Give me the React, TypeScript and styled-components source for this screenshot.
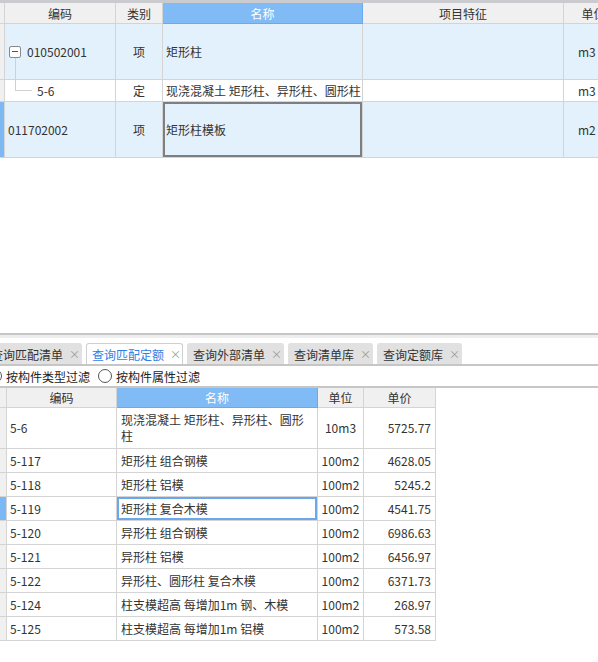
import React from "react";
import styled, { createGlobalStyle, css } from "styled-components";

const GlobalStyle = createGlobalStyle`
  html, body {
    margin: 0;
    padding: 0;
    background: #ffffff;
  }
  body {
    font-family: "Noto Sans CJK SC", "Microsoft YaHei", sans-serif;
    font-size: 12px;
    color: #333333;
  }
`;

const topRows = [
  { code: "010502001", kind: "项", name: "矩形柱", unit: "m3", height: 56, tint: true, tree: "parent" },
  { code: "5-6", kind: "定", name: "现浇混凝土 矩形柱、异形柱、圆形柱", unit: "m3", height: 22, tint: false, tree: "child" },
  { code: "011702002", kind: "项", name: "矩形柱模板", unit: "m2", height: 56, tint: true, tree: "", selected: true },
];

const quotaRows = [
  { code: "5-6", name: "现浇混凝土 矩形柱、异形柱、圆形柱", unit: "10m3", price: "5725.77", tall: true },
  { code: "5-117", name: "矩形柱 组合钢模", unit: "100m2", price: "4628.05" },
  { code: "5-118", name: "矩形柱 铝模", unit: "100m2", price: "5245.2" },
  { code: "5-119", name: "矩形柱 复合木模", unit: "100m2", price: "4541.75", selected: true },
  { code: "5-120", name: "异形柱 组合钢模", unit: "100m2", price: "6986.63" },
  { code: "5-121", name: "异形柱 铝模", unit: "100m2", price: "6456.97" },
  { code: "5-122", name: "异形柱、圆形柱 复合木模", unit: "100m2", price: "6371.73" },
  { code: "5-124", name: "柱支模超高 每增加1m 钢、木模", unit: "100m2", price: "268.97" },
  { code: "5-125", name: "柱支模超高 每增加1m 铝模", unit: "100m2", price: "573.58" },
];

const tabs = [
  { label: "查询匹配清单" },
  { label: "查询匹配定额", active: true },
  { label: "查询外部清单" },
  { label: "查询清单库" },
  { label: "查询定额库" },
];

const App = () => {
  return (
    <>
      <GlobalStyle />
      <Page>
        <TopPane>
          <BillGrid>
            <Head />
            <Head>编码</Head>
            <Head>类别</Head>
            <Head $accent>名称</Head>
            <Head>项目特征</Head>
            <Head>单位</Head>
            {topRows.map((r) => (
              <React.Fragment key={r.code}>
                <Marker $h={r.height} $on={!!r.selected} />
                <Cell $h={r.height} $tint={r.tint} $pad={r.tree ? 0 : 3}>
                  {r.tree === "parent" && (
                    <>
                      <Toggle>
                        <i />
                      </Toggle>
                      <CodeText $gap={6}>{r.code}</CodeText>
                    </>
                  )}
                  {r.tree === "child" && (
                    <>
                      <Connector />
                      <CodeText $gap={5}>{r.code}</CodeText>
                    </>
                  )}
                  {!r.tree && <CodeText $gap={0}>{r.code}</CodeText>}
                </Cell>
                <Cell $h={r.height} $tint={r.tint} $center>
                  {r.kind}
                </Cell>
                <Cell $h={r.height} $tint={r.tint} $pad={3} $focus={r.selected ? "gray" : undefined}>
                  {r.name}
                </Cell>
                <Cell $h={r.height} $tint={r.tint} />
                <Cell $h={r.height} $tint={r.tint} $pad={14}>
                  {r.unit}
                </Cell>
              </React.Fragment>
            ))}
          </BillGrid>
        </TopPane>
        <SplitBand />
        <TabBar>
          <TabStrip>
            {tabs.map((t) => (
              <Tab key={t.label} $active={!!t.active}>
                <span>{t.label}</span>
                <Close>×</Close>
              </Tab>
            ))}
          </TabStrip>
        </TabBar>
        <FilterRow>
          <Radio>
            <Dot />
            按构件类型过滤
          </Radio>
          <Radio>
            <Dot />
            按构件属性过滤
          </Radio>
        </FilterRow>
        <QuotaArea>
          <QuotaGrid>
            <QHead />
            <QHead>编码</QHead>
            <QHead $accent>名称</QHead>
            <QHead>单位</QHead>
            <QHead>单价</QHead>
            {quotaRows.map((r) => {
              const h = r.tall ? 41 : 24;
              return (
                <React.Fragment key={r.code}>
                  <QMarker $h={h} $on={!!r.selected} />
                  <QCell $h={h} $pad={3}>
                    {r.code}
                  </QCell>
                  <QCell $h={h} $pad={4} $focus={r.selected}>
                    {r.name}
                  </QCell>
                  <QCell $h={h} $center>
                    {r.unit}
                  </QCell>
                  <QCell $h={h} $right>
                    {r.price}
                  </QCell>
                </React.Fragment>
              );
            })}
          </QuotaGrid>
        </QuotaArea>
      </Page>
    </>
  );
};

const Page = styled.div`
  width: 598px;
  height: 662px;
  overflow: hidden;
  display: flex;
  flex-direction: column;
  background: #ffffff;
`;

const TopPane = styled.div`
  box-sizing: border-box;
  height: 335px;
  flex: none;
  border-top: 3px solid #c9cbcf;
  border-bottom: 2px solid #c6c6c6;
  overflow: hidden;
`;

const BillGrid = styled.div`
  display: grid;
  grid-template-columns: 5px 111px 47px 200px 201px 60px;
  width: 624px;
`;

const cellBase = css`
  box-sizing: border-box;
  border-right: 1px solid #d4d4d4;
  border-bottom: 1px solid #d4d4d4;
  display: flex;
  align-items: center;
  white-space: nowrap;
  overflow: hidden;
`;

const Head = styled.div<{ $accent?: boolean }>`
  ${cellBase};
  height: 21px;
  justify-content: center;
  background: ${(p) => (p.$accent ? "#80bbf6" : "#f0f0f0")};
  color: ${(p) => (p.$accent ? "#ffffff" : "#333333")};
  border-right-color: ${(p) => (p.$accent ? "#6aa9ee" : "#d4d4d4")};
  border-bottom-color: ${(p) => (p.$accent ? "#6aa9ee" : "#d4d4d4")};
`;

const Marker = styled.div<{ $h: number; $on: boolean }>`
  ${cellBase};
  height: ${(p) => p.$h}px;
  background: ${(p) => (p.$on ? "#7cb8f4" : "#f0f0f0")};
`;

const Cell = styled.div<{
  $h: number;
  $tint?: boolean;
  $center?: boolean;
  $pad?: number;
  $focus?: string;
}>`
  ${cellBase};
  position: relative;
  height: ${(p) => p.$h}px;
  background: ${(p) => (p.$tint ? "#e3f1fd" : "#ffffff")};
  justify-content: ${(p) => (p.$center ? "center" : "flex-start")};
  padding-left: ${(p) => (p.$center ? 0 : p.$pad ?? 0)}px;
  overflow: visible;
  ${(p) =>
    p.$focus &&
    css`
      box-shadow: inset 0 0 0 2px #7d7f82;
    `}
`;

const Toggle = styled.span`
  position: relative;
  box-sizing: border-box;
  flex: none;
  width: 12px;
  height: 12px;
  margin-left: 4px;
  border: 1px solid #8a8a8a;
  border-radius: 2px;
  background: #ffffff;
  display: flex;
  align-items: center;
  justify-content: center;

  & i {
    display: block;
    width: 6px;
    height: 1px;
    background: #555555;
  }

  &::after {
    content: "";
    position: absolute;
    left: 5px;
    top: 11px;
    height: 23px;
    border-left: 1px solid #d0d0d0;
  }
`;

const Connector = styled.span`
  align-self: flex-start;
  flex: none;
  box-sizing: border-box;
  width: 17px;
  height: 11px;
  margin-left: 10px;
  border-left: 1px solid #d0d0d0;
  border-bottom: 1px solid #d0d0d0;
`;

const CodeText = styled.span<{ $gap: number }>`
  margin-left: ${(p) => p.$gap}px;
`;

const SplitBand = styled.div`
  height: 3px;
  flex: none;
  background: #eeeeee;
`;

const TabBar = styled.div`
  flex: none;
  padding-top: 5px;
  border-bottom: 2px solid #c6c6c6;
  overflow: hidden;
`;

const TabStrip = styled.div`
  display: flex;
  gap: 4px;
  margin-left: -15px;
`;

const Tab = styled.div<{ $active: boolean }>`
  box-sizing: border-box;
  height: 21px;
  display: flex;
  align-items: center;
  gap: 6px;
  padding: 0 5px;
  border-radius: 3px 3px 0 0;
  white-space: nowrap;
  background: ${(p) => (p.$active ? "#ffffff" : "#e1e1e1")};
  color: ${(p) => (p.$active ? "#2f7fe6" : "#333333")};
  border: 1px solid ${(p) => (p.$active ? "#cfcfcf" : "#e1e1e1")};
  border-bottom: none;
`;

const Close = styled.span`
  width: 7px;
  font-size: 11px;
  color: #9a9a9a;
  line-height: 1;
`;

const FilterRow = styled.div`
  flex: none;
  height: 20px;
  display: flex;
  align-items: center;
  gap: 8px;
  margin-left: -12px;
  white-space: nowrap;
`;

const Radio = styled.label`
  display: flex;
  align-items: center;
  gap: 4px;
  color: #222222;
`;

const Dot = styled.span`
  box-sizing: border-box;
  width: 14px;
  height: 14px;
  border-radius: 50%;
  border: 1px solid #555555;
  background: #ffffff;
`;

const QuotaArea = styled.div`
  flex: 1;
  border-top: 2px solid #c6c6c6;
`;

const QuotaGrid = styled.div`
  display: grid;
  grid-template-columns: 7px 110px 201px 46px 72px;
  width: 436px;
`;

const QHead = styled.div<{ $accent?: boolean }>`
  ${cellBase};
  height: 20px;
  justify-content: center;
  background: ${(p) => (p.$accent ? "#80bbf6" : "#f0f0f0")};
  color: ${(p) => (p.$accent ? "#ffffff" : "#333333")};
  border-right-color: ${(p) => (p.$accent ? "#6aa9ee" : "#d4d4d4")};
  border-bottom-color: ${(p) => (p.$accent ? "#6aa9ee" : "#d4d4d4")};
`;

const QMarker = styled.div<{ $h: number; $on: boolean }>`
  ${cellBase};
  height: ${(p) => p.$h}px;
  background: ${(p) => (p.$on ? "#7cb8f4" : "#f0f0f0")};
`;

const QCell = styled.div<{
  $h: number;
  $center?: boolean;
  $right?: boolean;
  $pad?: number;
  $focus?: boolean;
}>`
  ${cellBase};
  height: ${(p) => p.$h}px;
  white-space: normal;
  line-height: 16px;
  justify-content: ${(p) => (p.$center ? "center" : p.$right ? "flex-end" : "flex-start")};
  padding: 0 ${(p) => (p.$right ? 4 : p.$pad ?? 0)}px 0 ${(p) => p.$pad ?? 0}px;
  ${(p) =>
    p.$focus &&
    css`
      box-shadow: inset 0 0 0 2px #6aa7ec;
    `}
`;

export default App;
